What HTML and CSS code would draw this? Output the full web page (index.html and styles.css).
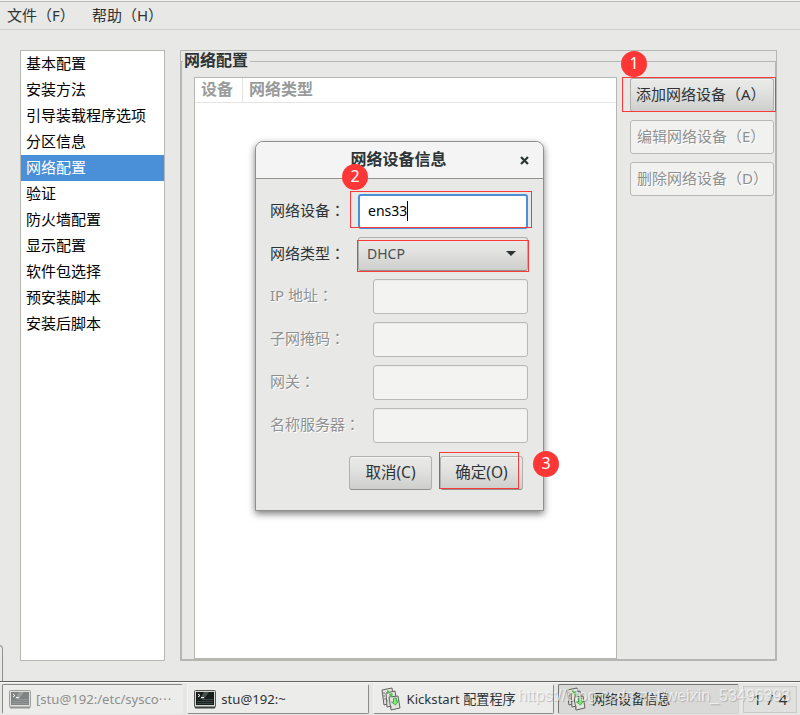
FILE: index.html
```html
<!DOCTYPE html>
<html lang="zh-CN">
<head>
  <meta charset="UTF-8">
  <meta name="viewport" content="width=device-width, initial-scale=1.0">
  <title>Kickstart 配置程序</title>
  <link rel="stylesheet" href="styles.css">
</head>
<body>
  <svg class="defs" width="0" height="0">
    <symbol id="terminal" viewBox="0 0 22 19">
      <rect x="0.5" y="0.5" width="21" height="17" rx="1" fill="#d5d7d3" stroke="#555753"/>
      <rect x="2" y="2" width="18" height="13" fill="#171d1d"/>
      <path d="M3 11.5h16M3 13.5h16M8 9.5h11" stroke="#3c4a45"/>
      <path d="M10 2h5l-5 7H6z" fill="#6d7773" opacity=".6"/>
      <path d="M4 4l2 1.5L4 7M7 7.5h3" fill="none" stroke="#fff"/>
      <path d="M1 17.5h20" stroke="#3d403c" stroke-width="2"/>
    </symbol>
    <symbol id="kickstart" viewBox="0 0 20 24">
      <g fill="#e3e4e1" stroke="#60645e">
        <path d="M1 3l10-2 2 14-10 3z"/>
        <path d="M5 6l9-2 2 14-10 2z"/>
        <path d="M8 10l9-1 2 12-9 2z"/>
      </g>
      <path d="M2 6h2M2 9h2M3 12h2M5 14h2M9 20h2" stroke="#777" fill="none"/>
      <path d="M6 3l2 1 1 2-3 1zM8 7l3-1 1 2-3 2z" fill="#5abb55"/>
      <path d="M12.500 11h3v3h2l-3 4-4-3h2z" fill="#7cea70" stroke="#3f9e49" stroke-width=".8"/>
    </symbol>
  </svg>

  <div class="menubar">
    <span>文件（F）</span>
    <span>帮助（H）</span>
  </div>

  <div class="main">
    <ul class="sidebar">
      <li>基本配置</li>
      <li>安装方法</li>
      <li>引导装载程序选项</li>
      <li>分区信息</li>
      <li class="selected">网络配置</li>
      <li>验证</li>
      <li>防火墙配置</li>
      <li>显示配置</li>
      <li>软件包选择</li>
      <li>预安装脚本</li>
      <li>安装后脚本</li>
    </ul>

    <div class="panel">
      <div class="panel-title"><span>网络配置</span></div>
      <div class="panel-body">
        <div class="table">
          <div class="table-head">
            <span>设备</span>
            <span>网络类型</span>
          </div>
        </div>
        <div class="actions">
          <button class="btn first">添加网络设备（A）</button>
          <button class="btn" disabled>编辑网络设备（E）</button>
          <button class="btn" disabled>删除网络设备（D）</button>
        </div>
      </div>
    </div>
  </div>

  <div class="taskbar">
    <div class="task minimized"><svg class="term"><use href="#terminal"/></svg><span>[stu@192:/etc/sysco<i>···</i></span></div>
    <div class="task"><svg class="term"><use href="#terminal"/></svg><span>stu@192:~</span></div>
    <div class="task"><svg class="kick"><use href="#kickstart"/></svg><span>Kickstart 配置程序</span></div>
    <div class="task active"><svg class="kick"><use href="#kickstart"/></svg><span>网络设备信息</span></div>
    <div class="pager">1 / 4</div>
  </div>

  <div class="dialog">
    <div class="dialog-head">
      <span>网络设备信息</span>
      <svg class="close" viewBox="0 0 9 9"><path d="M1 1l7 7M8 1L1 8" stroke="#2e3436" stroke-width="2.200"/></svg>
    </div>
    <div class="dialog-body">
      <div class="field">
        <label>网络设备<b lang="zh-TW">：</b></label>
        <div class="input focused"><span class="caret">ens33</span></div>
      </div>
      <div class="field field-select">
        <label>网络类型<b lang="zh-TW">：</b></label>
        <div class="select"><span>DHCP</span><svg class="arrow" viewBox="0 0 10 5"><path d="M0 0h10L5 5z" fill="#2e3436"/></svg></div>
      </div>
      <div class="field disabled"><label>IP 地址<b lang="zh-TW">：</b></label><div class="input"></div></div>
      <div class="field disabled"><label>子网掩码<b lang="zh-TW">：</b></label><div class="input"></div></div>
      <div class="field disabled"><label>网关<b lang="zh-TW">：</b></label><div class="input"></div></div>
      <div class="field disabled"><label>名称服务器<b lang="zh-TW">：</b></label><div class="input"></div></div>
      <div class="dialog-buttons">
        <button class="btn">取消(C)</button>
        <button class="btn">确定(O)</button>
      </div>
    </div>
  </div>

  <!-- step marks -->
  <div class="mark mark-add"></div>
  <div class="mark mark-device"></div>
  <div class="mark mark-type"></div>
  <div class="mark mark-ok"></div>
  <div class="badge badge-1">1</div>
  <div class="badge badge-2">2</div>
  <div class="badge badge-3">3</div>

  <div class="corner"></div>
  <div class="watermark">https://blog.csdn.net/weixin_53496393</div>
</body>
</html>
```

FILE: styles.css
```css
* {
  box-sizing: border-box;
}
body {
  margin: 0;
  width: 800px;
  height: 715px;
  position: relative;
  overflow: hidden;
  display: flex;
  flex-direction: column;
  background: #e8e8e6;
  color: #2e3436;
  font-family: "Noto Sans", "Noto Sans CJK SC", sans-serif;
  font-size: 15px;
  line-height: 20px;
  white-space: nowrap;
}
.defs {
  position: absolute;
}
.menubar {
  height: 30px;
  flex: none;
  display: flex;
  gap: 16px;
  padding: 5px 8px 0 7px;
  border-bottom: 1px solid #cfcfcd;
  box-shadow: inset 0 1px #f2f2f1, inset 0 2px #babab7;
}
.menubar span {
  width: 69px;
}
.main {
  height: 651px;
  flex: none;
  display: flex;
  gap: 15px;
  padding: 20px 23px 20px 20px;
}
.sidebar {
  width: 145px;
  margin: 0;
  padding: 0;
  list-style: none;
  background: #fff;
  border: 1px solid #b6b6b3;
  color: #000;
}
.sidebar li {
  height: 26px;
  line-height: 24px;
  padding-left: 5px;
}
.sidebar .selected {
  background: #4a90d9;
  color: #fff;
}
.panel {
  flex: 1;
  display: flex;
  flex-direction: column;
  border: 1px solid #b6b6b3;
}
.panel-title {
  height: 10px;
  flex: none;
  padding-left: 2px;
  font-weight: bold;
  font-size: 16px;
  line-height: 19px;
}
.panel-title span {
  position: relative;
  display: inline-block;
  padding: 0 2px 0 1px;
  background: #e8e8e6;
}
.panel-body {
  flex: 1;
  display: flex;
  gap: 13px;
  padding: 15px 1px 0 12px;
  border: 1px solid #b6b6b3;
}
.table {
  width: 423px;
  background: #fff;
  border: 1px solid #b6b6b3;
}
.table-head {
  display: flex;
  height: 25px;
  line-height: 23px;
  font-weight: bold;
  font-size: 16px;
  color: #999b9b;
  border-bottom: 1px solid #e4e4e3;
}
.table-head span {
  padding-left: 6px;
}
.table-head span:first-child {
  width: 48px;
  border-right: 1px solid #e4e4e3;
}
.actions {
  width: 144px;
  display: flex;
  flex-direction: column;
  gap: 8px;
  padding-top: 1px;
}
.btn {
  height: 34px;
  padding: 0 0 2px;
  border: 1px solid #b0b0ad;
  border-bottom-color: #8f8f8c;
  border-radius: 3px;
  background: linear-gradient(#eaeae9, #e2e2e1 40%, #cececc);
  box-shadow: inset 0 1px #f4f4f3;
  color: #2e3436;
  font: 15px/20px "Noto Sans", "Noto Sans CJK SC", sans-serif;
  white-space: nowrap;
}
.actions .btn {
  display: flex;
  align-items: center;
  padding-left: 6px;
}
.actions .first {
  padding-left: 5px;
}
.btn:disabled {
  background: #f1f1f0;
  border-color: #b8b8b5;
  box-shadow: none;
  color: #8f9191;
  text-shadow: 1px 1px #fff;
}

.taskbar {
  height: 34px;
  flex: none;
  display: flex;
  gap: 4px;
  padding: 2px 2px 1px;
  border-top: 1px solid #60605e;
  background: #e6e6e5;
  box-shadow: inset 0 1px #fafafa;
  font-size: 13.1px;
}
.task {
  width: 181.3px;
  flex: none;
  display: flex;
  align-items: center;
  gap: 5px;
  padding-left: 6px;
  background: #ececeb;
  border: 1px solid #f4f4f3;
  border-right-color: #8b8b89;
  border-bottom-color: #8b8b89;
  border-radius: 2px;
}
.task i {
  font-style: normal;
  letter-spacing: 1px;
}
.task.minimized {
  border-color: #8b8b89 #ececeb #ececeb #8b8b89;
  color: #8d8f8f;
}
.task.minimized svg {
  opacity: .5;
}
.task.active {
  padding-left: 7px;
  background: #d9d9d8;
  border-color: #777775 #d0d0cf #d0d0cf #777775;
}
.term {
  width: 22px;
  height: 19px;
}
.kick {
  width: 20px;
  height: 24px;
  margin: 0 1px;
}
.task.active .kick {
  margin: 0 1px 0 0;
}
.pager {
  width: 54px;
  height: 27px;
  margin-top: 2px;
  border: 1px solid #c9c9c7;
  background: #e0e0df;
  text-align: center;
  font-size: 15px;
  line-height: 24px;
  word-spacing: 2px;
}

.dialog {
  position: absolute;
  left: 255px;
  top: 141px;
  width: 289px;
  height: 370px;
  border: 1px solid #8f8f8c;
  border-radius: 8px 8px 0 0;
  background: #e8e8e6;
  box-shadow: 0 3px 7px rgba(0, 0, 0, .5);
}
.dialog-head {
  height: 37px;
  display: grid;
  grid-template-columns: 18px 1fr 18px;
  align-items: center;
  padding: 0 10px 2px 8px;
  border-bottom: 1px solid #92928e;
  border-radius: 7px 7px 0 0;
  background: #f4f4f4;
  font-weight: bold;
  font-size: 16px;
}
.dialog-head span {
  grid-column: 2;
  text-align: center;
}
.close {
  width: 9px;
  height: 9px;
  margin: 2px 0 0 5px;
}
.dialog-body {
  display: flex;
  flex-direction: column;
  gap: 8px;
  padding: 15px 15px 0 14px;
}
.field {
  height: 35px;
  display: flex;
  justify-content: space-between;
}
.field-select {
  height: 34px;
}
.field label {
  line-height: 31px;
}
.field b {
  font-family: "Noto Sans CJK TC", sans-serif;
  font-weight: normal;
}
.input, .select {
  width: 170px;
  border: 1px solid #b0b0ad;
  border-radius: 3px;
}
.input.focused {
  border: 2px solid #4a90d9;
  background: #fff;
  color: #000;
  padding: 5px 0 0 8px;
  font-size: 14px;
}
.caret {
  display: inline-block;
  border-right: 1px solid #000;
}
.select {
  display: flex;
  justify-content: space-between;
  align-items: center;
  padding: 0 11px 1px 8px;
  border-bottom-color: #8f8f8c;
  background: linear-gradient(#eaeae9, #e2e2e1 40%, #cececc);
  color: #4a4f50;
  font-size: 14px;
}
.arrow {
  width: 10px;
  height: 5px;
}
.disabled label {
  color: #8f9191;
  text-shadow: 1px 1px #fff;
}
.disabled .input {
  width: 155px;
  background: #f3f3f2;
  border-color: #b8b8b5;
  box-shadow: inset 0 1px 1px #eaeae9;
}
.dialog-buttons {
  display: flex;
  justify-content: flex-end;
  gap: 8px;
  padding: 5px 5px 0 0;
}
.dialog-buttons .btn {
  width: 83px;
  font-size: 15.5px;
}

.mark {
  position: absolute;
  border: 1px solid #fb3a3a;
}
.mark-add {
  left: 622px;
  top: 77px;
  width: 154px;
  height: 35px;
}
.mark-device {
  left: 350px;
  top: 191px;
  width: 182px;
  height: 37px;
}
.mark-type {
  left: 357px;
  top: 240px;
  width: 172px;
  height: 32px;
}
.mark-ok {
  left: 439px;
  top: 452px;
  width: 80px;
  height: 37px;
}
.badge {
  position: absolute;
  width: 26px;
  height: 26px;
  border-radius: 50%;
  background: #fd3636;
  color: #fff;
  text-align: center;
  font-size: 16px;
  line-height: 24px;
}
.badge-1 {
  left: 621px;
  top: 51px;
}
.badge-2 {
  left: 342px;
  top: 164px;
}
.badge-3 {
  left: 533px;
  top: 451px;
}
/* edge of the window behind */
.corner {
  position: absolute;
  left: -8px;
  top: 645px;
  width: 11px;
  height: 36px;
  border: 1px solid #92928e;
  border-bottom: 0;
  border-radius: 0 4px 0 0;
}
.watermark {
  position: absolute;
  left: 518px;
  top: 686px;
  color: rgba(255, 255, 255, .65);
  text-shadow: 1px 1px 1px rgba(0, 0, 0, .2);
  font-family: "Liberation Sans", sans-serif;
  font-size: 16px;
}
```
